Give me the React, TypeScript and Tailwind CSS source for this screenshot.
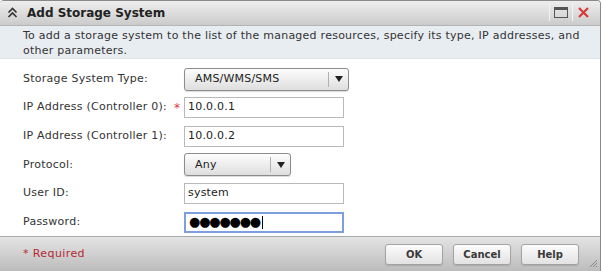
import React from "react";

const font = { fontFamily: '"DejaVu Sans", Verdana, sans-serif' };

function Select({ value, width }: { value: string; width: string }) {
  return (
    <div
      className={`${width} h-[23px] flex items-center rounded-[3px] border border-[#8c8c8c] bg-gradient-to-b from-[#fdfdfd] to-[#dedede] shadow-[0_1px_1px_rgba(0,0,0,0.15)]`}
    >
      <span className="flex-1 pl-[10px] text-[11px] tracking-[0.2px] text-[#222]">{value}</span>
      <span className="w-px h-[15px] bg-[#b0b0b0]" />
      <span className="w-[19px] flex justify-center">
        <svg width="8" height="6" viewBox="0 0 8 6">
          <path d="M0 0 H8 L4 6 Z" fill="#222" />
        </svg>
      </span>
    </div>
  );
}

function Input({ value, focused }: { value: React.ReactNode; focused?: boolean }) {
  return (
    <div
      className={`w-[160px] h-[21px] flex items-center bg-white pl-[3px] text-[11px] tracking-[0.2px] text-[#222] border ${
        focused ? "border-[#7d9fe0] border-2 pl-[1px]" : "border-[#b9b9b9]"
      }`}
    >
      {value}
    </div>
  );
}

function Row({ label, required, children }: { label: string; required?: boolean; children: React.ReactNode }) {
  return (
    <div className="h-[28.6px] flex items-center">
      <span className="w-[151px] text-[11px] tracking-[0.25px] text-[#333]">{label}</span>
      <span className="w-[10px] text-[12px] text-[#e0393e] leading-none">{required ? "*" : ""}</span>
      {children}
    </div>
  );
}

function Button({ children }: { children: string }) {
  return (
    <button className="w-[58px] h-[21px] rounded-[3px] border border-[#a3a3a3] bg-gradient-to-b from-[#fcfcfc] to-[#e2e2e2] text-[10px] font-bold text-[#3a3a3a] shadow-[0_1px_1px_rgba(0,0,0,0.12)]">
      {children}
    </button>
  );
}

export default function App() {
  return (
    <div className="w-[603px] h-[271px] bg-white" style={font}>
      <div className="w-[601px] h-[271px] flex flex-col border-r border-t border-[#8a8a8a] rounded-tl-[4px] rounded-tr-[4px] overflow-hidden">
        {/* Title bar */}
        <div className="h-[25px] flex items-center bg-gradient-to-b from-[#eeeeee] to-[#cbcbcb] border-b border-[#b4b4b4]">
          <svg className="ml-[7px] mr-[9px]" width="11" height="11" viewBox="0 0 11 11">
            <path d="M1.5 5.5 L5.5 1.5 L9.5 5.5 M1.5 10 L5.5 6 L9.5 10" stroke="#333" strokeWidth="1.7" fill="none" />
          </svg>
          <span className="text-[12px] font-bold text-[#222]">Add Storage System</span>
          <div className="ml-auto flex items-center h-full">
            <span className="w-px h-[17px] bg-[#a8a8a8] border-r border-[#f4f4f4]" />
            <span className="mx-[4px] w-[14px] h-[11px] border-[1.5px] border-[#555] border-t-[3px]" />
            <span className="w-px h-[17px] bg-[#a8a8a8] border-r border-[#f4f4f4]" />
            <svg className="ml-[5px] mr-[11px]" width="11" height="11" viewBox="0 0 11 11">
              <path d="M1 1 L10 10 M10 1 L1 10" stroke="#d83a3a" strokeWidth="2.2" />
            </svg>
          </div>
        </div>

        {/* Description */}
        <div className="h-[33px] bg-[#e8edf2] pl-[23px] pr-[20px] pt-[2px] text-[11px] leading-[15px] tracking-[0.25px] text-[#333] border-b border-[#dfe3e8]">
          To add a storage system to the list of the managed resources, specify its type, IP addresses, and
          other parameters.
        </div>

        {/* Form */}
        <div className="flex-1 pl-[23px] pt-[6px] flex flex-col">
          <Row label="Storage System Type:">
            <Select value="AMS/WMS/SMS" width="w-[165px]" />
          </Row>
          <Row label="IP Address (Controller 0):" required>
            <Input value="10.0.0.1" />
          </Row>
          <Row label="IP Address (Controller 1):">
            <Input value="10.0.0.2" />
          </Row>
          <Row label="Protocol:">
            <Select value="Any" width="w-[107px]" />
          </Row>
          <Row label="User ID:">
            <Input value="system" />
          </Row>
          <Row label="Password:">
            <Input
              focused
              value={
                <span className="flex items-center text-[13px] tracking-[-1.2px] text-black">
                  ●●●●●●●<span className="ml-[2px] w-px h-[13px] bg-black" />
                </span>
              }
            />
          </Row>
        </div>

        {/* Footer */}
        <div className="h-[35px] flex items-center bg-gradient-to-b from-[#e4e4e4] to-[#bcbcbc] border-t border-[#a9a9a9]">
          <span className="pl-[23px] text-[11px] tracking-[0.4px] text-[#b52a34]">* Required</span>
          <div className="ml-auto flex items-center gap-[10px]">
            <Button>OK</Button>
            <Button>Cancel</Button>
            <Button>Help</Button>
          </div>
          <svg className="ml-[10px] mr-[2px] self-end mb-[3px]" width="9" height="9" viewBox="0 0 9 9">
            <path d="M8 1 L1 8 M8 4 L4 8 M8 7 L7 8" stroke="#888" strokeWidth="1" />
          </svg>
        </div>
      </div>
    </div>
  );
}
